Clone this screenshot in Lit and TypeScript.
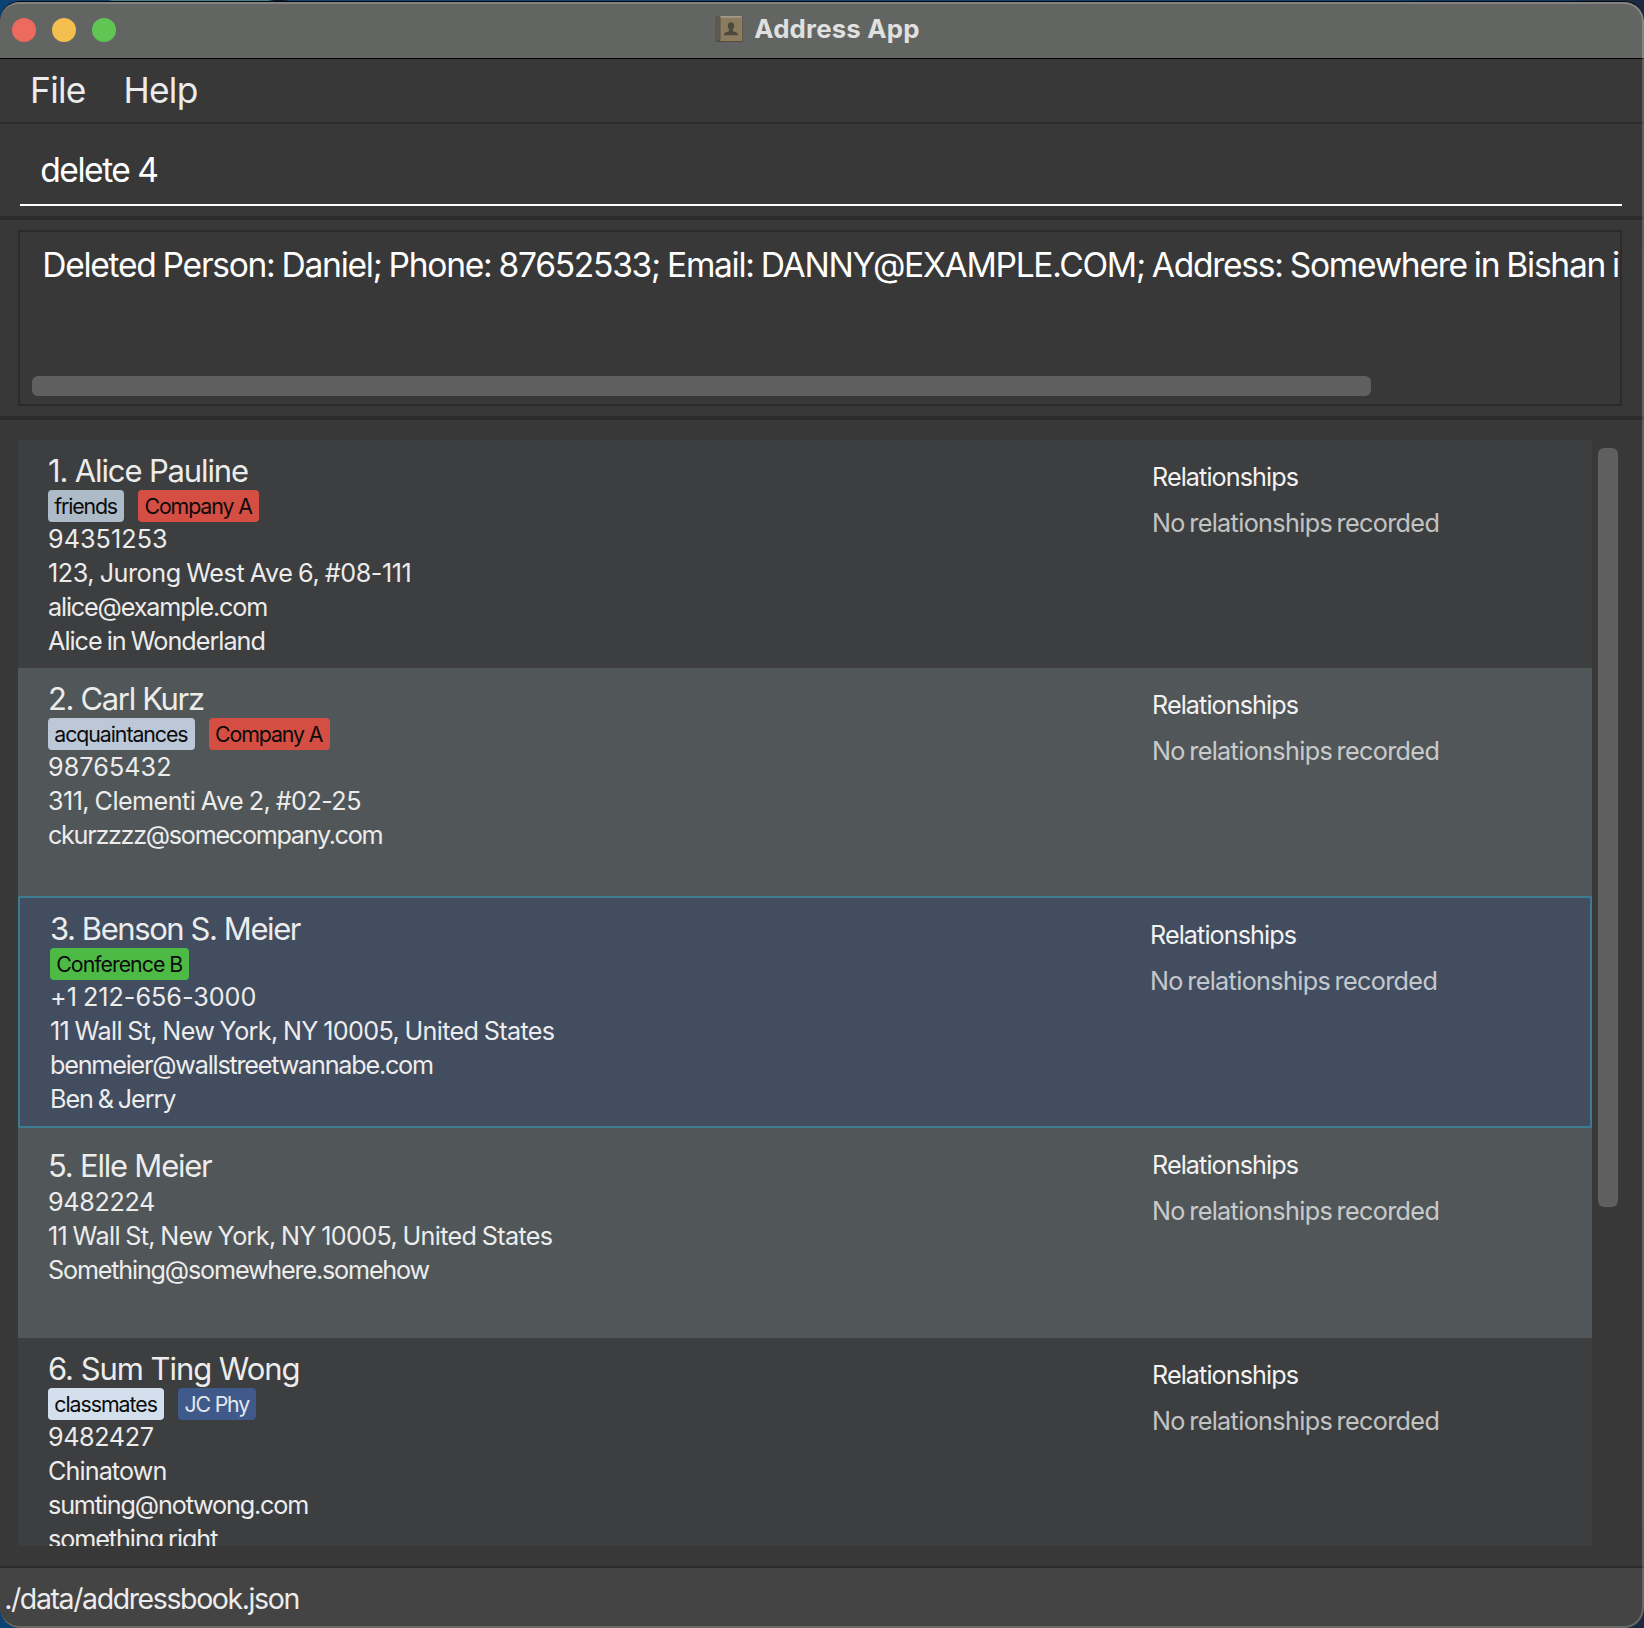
import { LitElement, html, css, nothing } from "lit";
import { customElement, property } from "lit/decorators.js";
import { classMap } from "lit/directives/class-map.js";
import { styleMap } from "lit/directives/style-map.js";

/** A string together with its tracking in pixels. */
type Line = [text: string, tracking: number];

interface Tag {
  label: Line;
  kind: string;
}

interface Person {
  name: Line;
  tags: Tag[];
  details: Line[];
  selected?: boolean;
  shade: "dark" | "light";
}

const PEOPLE: Person[] = [
  {
    name: ["1. Alice Pauline", -1.14],
    tags: [
      { label: ["friends", -1.15], kind: "friends" },
      { label: ["Company A", -1.08], kind: "company" },
    ],
    details: [
      ["94351253", 0.05],
      ["123, Jurong West Ave 6, #08-111", -0.46],
      ["alice@example.com", -1.16],
      ["Alice in Wonderland", -1.0],
    ],
    shade: "dark",
  },
  {
    name: ["2. Carl Kurz", -1.35],
    tags: [
      { label: ["acquaintances", -1.05], kind: "acquaintances" },
      { label: ["Company A", -1.08], kind: "company" },
    ],
    details: [
      ["98765432", 0.05],
      ["311, Clementi Ave 2, #02-25", -0.56],
      ["ckurzzzz@somecompany.com", -1.3],
      ["", 0],
    ],
    shade: "light",
  },
  {
    name: ["3. Benson S. Meier", -1.42],
    tags: [{ label: ["Conference B", -0.98], kind: "conference" }],
    details: [
      ["+1 212-656-3000", -0.02],
      ["11 Wall St, New York, NY 10005, United States", -0.66],
      ["benmeier@wallstreetwannabe.com", -1.22],
      ["Ben & Jerry", -1.1],
    ],
    selected: true,
    shade: "dark",
  },
  {
    name: ["5. Elle Meier", -1.22],
    tags: [],
    details: [
      ["9482224", -0.34],
      ["11 Wall St, New York, NY 10005, United States", -0.66],
      ["Something@somewhere.somehow", -1.19],
      ["", 0],
    ],
    shade: "light",
  },
  {
    name: ["6. Sum Ting Wong", -1.06],
    tags: [
      { label: ["classmates", -1.02], kind: "classmates" },
      { label: ["JC Phy", -1.15], kind: "jc" },
    ],
    details: [
      ["9482427", -0.4],
      ["Chinatown", -0.91],
      ["sumting@notwong.com", -1.16],
      ["something right", -1.07],
    ],
    shade: "dark",
  },
];

const track = (px: number) => styleMap({ letterSpacing: `${px}px` });

@customElement("person-card")
export class PersonCard extends LitElement {
  @property({ attribute: false }) person!: Person;

  static styles = css`
    :host {
      display: block;
      flex: none;
    }
    .card {
      box-sizing: border-box;
      display: flex;
      height: 228px;
      padding-left: 30px;
      color: #ececec;
      white-space: nowrap;
    }
    .dark {
      background: #3c3e3f;
    }
    .light {
      background: #515658;
    }
    .untagged {
      height: 210px;
    }
    .selected {
      height: 232px;
      background: #424d5f;
      border: 2px solid #3e7b91;
    }
    .info {
      flex: 1;
      display: flex;
      flex-direction: column;
      justify-content: center;
      padding-top: 2px;
    }
    .name {
      font-size: 31px;
      line-height: 38px;
    }
    .tags {
      display: flex;
      gap: 14px;
    }
    .tag {
      font-size: 21.3px;
      line-height: 32px;
      height: 32px;
      padding: 0 7.2px 0 6.3px;
      border-radius: 4px;
      color: #0b0b0b;
    }
    .friends {
      background: #adbac7;
    }
    .acquaintances {
      background: #bcc8d8;
    }
    .company {
      background: #d44e43;
    }
    .conference {
      background: #4dba46;
    }
    .classmates {
      background: #d3dfec;
    }
    .jc {
      background: #3f5a8a;
      color: #e4e7ee;
    }
    .detail {
      font-size: 25.2px;
      line-height: 34px;
      height: 34px;
      word-spacing: -1px;
    }
    .relations {
      width: 440px;
      display: flex;
      flex-direction: column;
      gap: 12px;
      padding-top: 20px;
      font-size: 25.2px;
      line-height: 34px;
    }
    .heading {
      color: #f2f2f2;
      letter-spacing: -0.92px;
    }
    .empty {
      color: #fff;
      opacity: 0.69;
      letter-spacing: -0.65px;
      word-spacing: -2px;
    }
  `;

  render() {
    const p = this.person;
    const classes = {
      card: true,
      [p.shade]: true,
      selected: !!p.selected,
      untagged: !p.tags.length,
    };
    return html`<div class=${classMap(classes)}>
      <div class="info">
        <div class="name" style=${track(p.name[1])}>${p.name[0]}</div>
        ${p.tags.length
          ? html`<div class="tags">
              ${p.tags.map(
                (t) =>
                  html`<span class="tag ${t.kind}" style=${track(t.label[1])}>${t.label[0]}</span>`
              )}
            </div>`
          : nothing}
        ${p.details.map(
          ([text, ls]) => html`<div class="detail" style=${track(ls)}>${text}</div>`
        )}
      </div>
      <div class="relations">
        <div class="heading">Relationships</div>
        <div class="empty">No relationships recorded</div>
      </div>
    </div>`;
  }
}

@customElement("app-root")
export class AppRoot extends LitElement {
  static styles = css`
    :host {
      display: block;
      height: 1628px;
      overflow: hidden;
      font-family: Inter, "Liberation Sans", sans-serif;
      background: linear-gradient(90deg, #0a4273 0 108px, #3f7f92 112px 268px, #07182a 274px 282px, #0a4478 290px 1400px, #0b3a6e 1420px 1560px, #1b2a40 1600px);
    }
    .desktop {
      box-sizing: border-box;
      height: 1628px;
      padding-top: 1px;
    }
    .window {
      box-sizing: border-box;
      height: 1627px;
      display: flex;
      flex-direction: column;
      border-top: 1px solid #0a0a0a;
      border-radius: 20px;
      overflow: hidden;
      background: #383838;
      position: relative;
    }
    /* light rim drawn over the window content */
    .rim {
      position: absolute;
      inset: 0;
      border: solid rgba(255, 255, 255, 0.2);
      border-width: 2px 2px 2px 0;
      border-radius: 19px 20px 20px 20px;
      pointer-events: none;
    }
    .titlebar {
      box-sizing: border-box;
      flex: none;
      height: 57px;
      display: grid;
      grid-template-columns: 1fr auto 1fr;
      align-items: center;
      padding: 0 21px 0 12px;
      border-bottom: 1px solid #000;
      background: #636563;
    }
    .lights {
      display: flex;
      gap: 16px;
    }
    .light {
      width: 24px;
      height: 24px;
      border-radius: 50%;
    }
    .close {
      background: #ed6a5e;
    }
    .minimise {
      background: #f5bf4f;
    }
    .zoom {
      background: #61c554;
    }
    .title {
      display: flex;
      align-items: center;
      gap: 10px;
      padding-bottom: 2px;
      font-size: 25.8px;
      line-height: 32px;
      font-weight: 700;
      letter-spacing: 0.2px;
      color: #dfe0df;
    }
    .book {
      display: block;
      width: 29px;
      height: 28px;
    }
    .menubar {
      flex: none;
      display: flex;
      height: 63px;
      gap: 37.7px;
      padding-left: 30px;
      border-bottom: 2px solid #2c2c2c;
      font-size: 35.3px;
      line-height: 63px;
      letter-spacing: -0.7px;
      color: #ececec;
    }
    .command {
      flex: none;
      padding: 12px 22px 10px 20px;
      border-bottom: 4px solid #2b2b2b;
    }
    .field {
      height: 68px;
      padding-left: 20.3px;
      border-bottom: 2px solid #fff;
      font-size: 33.6px;
      line-height: 68px;
      letter-spacing: -1.5px;
      color: #fff;
    }
    .result {
      flex: none;
      padding: 10px 22px 10px 18px;
      border-bottom: 4px solid #2b2b2b;
    }
    .output {
      box-sizing: border-box;
      height: 176px;
      display: flex;
      flex-direction: column;
      justify-content: space-between;
      border: 2px solid #2b2b2b;
      padding: 13px 0 8px 12px;
      overflow: hidden;
    }
    .message {
      padding-left: 10.2px;
      font-size: 33.6px;
      line-height: 40px;
      letter-spacing: -1.28px;
      word-spacing: -1.1px;
      white-space: nowrap;
      color: #fff;
    }
    .hthumb {
      width: 1339px;
      height: 20px;
      border-radius: 6px;
      background: #5f5f5f;
    }
    .listarea {
      flex: 1;
      min-height: 0;
      display: flex;
      gap: 6px;
      padding: 20px 26px 20px 18px;
    }
    .list {
      flex: 1;
      min-width: 0;
      display: flex;
      flex-direction: column;
      overflow: hidden;
    }
    .vthumb {
      width: 20px;
      height: 759px;
      margin-top: 8px;
      border-radius: 6px;
      background: #5f5f5f;
    }
    .status {
      flex: none;
      height: 60px;
      padding-left: 4.2px;
      border-top: 2px solid #2b2b2b;
      background: #444;
      font-size: 28.5px;
      line-height: 61px;
      letter-spacing: -1.4px;
      color: #ececec;
    }
  `;

  render() {
    return html`<div class="desktop">
      <div class="window">
        <div class="titlebar">
          <div class="lights">
            <span class="light close"></span>
            <span class="light minimise"></span>
            <span class="light zoom"></span>
          </div>
          <div class="title">
            <svg class="book" viewBox="0 0 29 28">
              <rect x="0.5" y="1" width="27.5" height="26" rx="1.5" fill="#4f4c48" />
              <rect x="1" y="1.5" width="4" height="24" fill="#5e5853" />
              <rect x="5.5" y="1.5" width="21.5" height="24" fill="#8b7c60" />
              <rect x="5.5" y="1" width="21.5" height="1.6" fill="#a19a8b" />
              <rect x="26.2" y="1.5" width="1" height="24" fill="#9c8556" />
              <rect x="5.5" y="24.8" width="21.5" height="1" fill="#9c8556" />
              <path d="M16 7.2c2 0 3.2 1.4 3.2 3.5 0 1.7-.7 2.9-1.4 3.7v1.3c0 .9 5.2 1.5 5.2 3.6v.9H9v-.9c0-2.1 5.2-2.7 5.2-3.6v-1.3c-.7-.8-1.4-2-1.4-3.7 0-2.1 1.2-3.5 3.2-3.5z" fill="#4d493f" />
            </svg>
            <span>Address App</span>
          </div>
        </div>
        <div class="menubar"><span>File</span><span>Help</span></div>
        <div class="command"><div class="field">delete 4</div></div>
        <div class="result">
          <div class="output">
            <div class="message">Deleted Person: Daniel; Phone: 87652533; Email: DANNY@EXAMPLE.COM; Address: Somewhere in Bishan i</div>
            <div class="hthumb"></div>
          </div>
        </div>
        <div class="listarea">
          <div class="list">
            ${PEOPLE.map((p) => html`<person-card .person=${p}></person-card>`)}
          </div>
          <div class="vthumb"></div>
        </div>
        <div class="status">./data/addressbook.json</div>
        <div class="rim"></div>
      </div>
    </div>`;
  }
}
